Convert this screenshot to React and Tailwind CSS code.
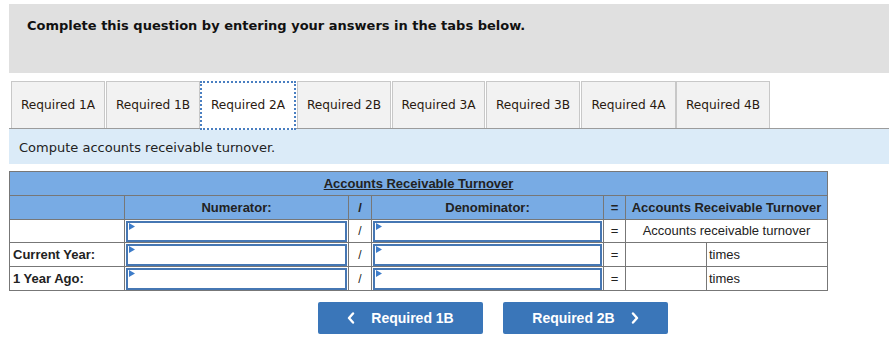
import React from "react";

const tabs = ["Required 1A","Required 1B","Required 2A","Required 2B","Required 3A","Required 3B","Required 4A","Required 4B"];
const tabX = [[11,104],[106,199],[200,295],[297,390],[392,484],[486,579],[581,675],[676,769]];

function Flag() {
  return (
    <svg className="absolute left-[1px] top-[0px]" width="7" height="8" viewBox="0 0 7 8">
      <polygon points="0,0 6,3.5 0,7" fill="#3d7cc9" />
    </svg>
  );
}

function InputCell({ h = 22 }) {
  return (
    <td className="p-0 border border-[#777]">
      <div className="relative border-2 border-[#4677b3] bg-white mx-[1px]" style={{ height: h }}>
        <Flag />
      </div>
    </td>
  );
}

function Chevron({ dir }) {
  return (
    <svg width="8" height="12" viewBox="0 0 8 12" className="shrink-0">
      <polyline
        points={dir === "left" ? "6,1.5 2,6 6,10.5" : "2,1.5 6,6 2,10.5"}
        fill="none"
        stroke="white"
        strokeWidth="2.4"
        strokeLinecap="round"
        strokeLinejoin="round"
      />
    </svg>
  );
}

export default function App() {
  const verdana = { fontFamily: '"DejaVu Sans", Verdana, sans-serif' };
  return (
    <div className="w-[889px] h-[361px] bg-white relative overflow-hidden">
      <div className="h-[4px]" />
      <div className="ml-[9px] h-[69px] bg-[#e0e0e0] pl-[18px] pt-[14px] text-[13px] font-bold text-[#111] leading-[16px]" style={verdana}>
        Complete this question by entering your answers in the tabs below.
      </div>
      <div className="h-[8px]" />
      <div className="relative ml-[9px] h-[48px] border-b border-[#9c9c9c]">
        {tabs.map((t, i) => {
          const [a, b] = tabX[i];
          const active = i === 2;
          return (
            <div
              key={t}
              className={
                "absolute top-0 h-[47px] flex items-center justify-center text-[12.2px] text-[#2a1a10] " +
                (active
                  ? "bg-white border-2 border-dotted border-[#4a7fc1] h-[49px] -top-[1px]"
                  : "bg-[#f2f2f2] border border-[#c8c8c8] border-b-0")
              }
              style={{ left: a - 9, width: b - a + 1, ...verdana }}
            >
              {t}
            </div>
          );
        })}
      </div>
      <div className="ml-[9px] h-[35px] bg-[#dbebf8] pl-[10px] pt-[11px] text-[13px] text-[#222] leading-[16px]" style={verdana}>
        Compute accounts receivable turnover.
      </div>
      <div className="h-[7px]" />
      <table
        className="ml-[9px] table-fixed border-collapse text-[13px] text-[#222]"
        style={{ width: 818, fontFamily: '"Liberation Sans", Arial, sans-serif' }}
      >
        <colgroup>
          <col style={{ width: 115 }} />
          <col style={{ width: 224 }} />
          <col style={{ width: 23 }} />
          <col style={{ width: 232 }} />
          <col style={{ width: 22 }} />
          <col style={{ width: 81 }} />
          <col style={{ width: 121 }} />
        </colgroup>
        <tbody>
          <tr className="bg-[#78abe4] h-[24px]">
            <td colSpan={7} className="border border-[#777] text-center font-bold underline p-0 leading-[20px] pt-[1px]">
              Accounts Receivable Turnover
            </td>
          </tr>
          <tr className="bg-[#78abe4] h-[24px] font-bold">
            <td className="border border-[#777] p-0"></td>
            <td className="border border-[#777] p-0 text-center">Numerator:</td>
            <td className="border border-[#777] p-0 text-center">/</td>
            <td className="border border-[#777] p-0 text-center">Denominator:</td>
            <td className="border border-[#777] p-0 text-center">=</td>
            <td colSpan={2} className="border border-[#777] p-0 text-center">Accounts Receivable Turnover</td>
          </tr>
          <tr className="h-[23px]">
            <td className="border border-[#777] p-0"></td>
            <InputCell h={21} />
            <td className="border border-[#777] p-0 text-center text-[12px]">/</td>
            <InputCell h={21} />
            <td className="border border-[#777] p-0 text-center">=</td>
            <td colSpan={2} className="border border-[#777] p-0 text-center">Accounts receivable turnover</td>
          </tr>
          {["Current Year:", "1 Year Ago:"].map((l) => (
            <tr key={l} className="h-[24px]">
              <td className="border border-[#777] p-0 pl-[3px] font-bold">{l}</td>
              <InputCell h={22} />
              <td className="border border-[#777] p-0 text-center text-[12px]">/</td>
              <InputCell h={22} />
              <td className="border border-[#777] p-0 text-center">=</td>
              <td className="border border-[#777] p-0"></td>
              <td className="border border-[#777] p-0 pl-[2px]">times</td>
            </tr>
          ))}
        </tbody>
      </table>
      <div className="flex gap-[20px] pl-[318px] mt-[11px]" style={{ fontFamily: '"Liberation Sans", Arial, sans-serif' }}>
        <button className="w-[165px] h-[32px] rounded-[2px] bg-[#3a76b9] text-white font-bold text-[14px] flex items-center justify-center">
          <span className="mr-[16px] flex"><Chevron dir="left" /></span>
          Required 1B
        </button>
        <button className="w-[165px] h-[32px] rounded-[2px] bg-[#3a76b9] text-white font-bold text-[14px] flex items-center justify-center">
          Required 2B
          <span className="ml-[16px] flex"><Chevron dir="right" /></span>
        </button>
      </div>
    </div>
  );
}
